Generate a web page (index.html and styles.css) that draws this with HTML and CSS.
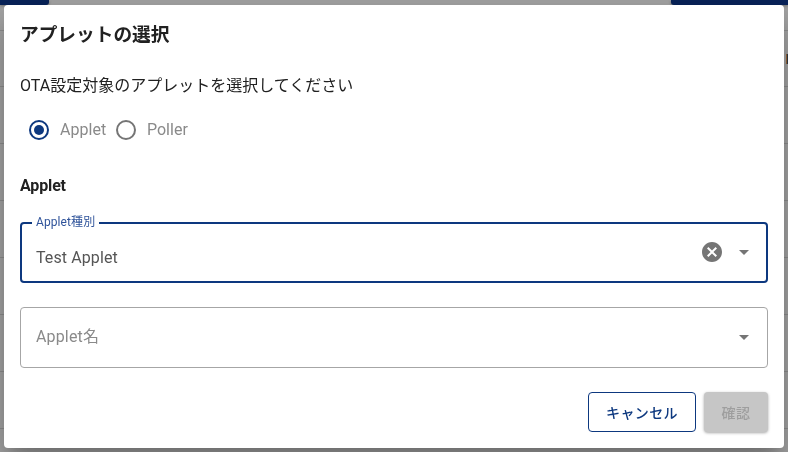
FILE: index.html
```html
<!DOCTYPE html>
<html lang="ja">
<head>
  <meta charset="UTF-8">
  <meta name="viewport" content="width=device-width, initial-scale=1.0">
  <title>アプレットの選択</title>
  <link rel="stylesheet" href="styles.css">
</head>
<body>

<!-- 背面の一覧画面 -->
<div class="page">
  <div class="toolbar">
    <div class="tool tool-left"></div>
    <div class="tool tool-right"></div>
  </div>
  <div class="row row-first"></div>
  <div class="row row-head"><span class="cell-mark"></span></div>
  <div class="row"></div>
  <div class="row"></div>
  <div class="row"></div>
  <div class="row"></div>
  <div class="row"></div>
  <div class="row"></div>
</div>

<!-- ダイアログ -->
<div class="overlay">
  <div class="dialog" role="dialog">
    <h2 class="title">アプレットの選択</h2>
    <p class="description">OTA設定対象のアプレットを選択してください</p>

    <div class="radio-group">
      <label class="radio">
        <svg class="radio-icon checked" viewBox="0 0 24 24">
          <circle cx="12" cy="12" r="9" fill="none" stroke="currentColor" stroke-width="2"/>
          <circle cx="12" cy="12" r="5" fill="currentColor"/>
        </svg>
        <span class="radio-label">Applet</span>
      </label>
      <label class="radio">
        <svg class="radio-icon" viewBox="0 0 24 24">
          <circle cx="12" cy="12" r="9" fill="none" stroke="currentColor" stroke-width="2"/>
        </svg>
        <span class="radio-label">Poller</span>
      </label>
    </div>

    <h3 class="section">Applet</h3>

    <fieldset class="select focused">
      <legend>Applet種別</legend>
      <div class="select-body">
        <span class="value">Test Applet</span>
        <svg class="icon clear" viewBox="0 0 24 24">
          <path d="M12 2C6.47 2 2 6.47 2 12s4.47 10 10 10 10-4.47 10-10S17.53 2 12 2zm5 13.59L15.59 17 12 13.41 8.41 17 7 15.59 10.59 12 7 8.41 8.41 7 12 10.59 15.59 7 17 8.41 13.41 12 17 15.59z"/>
        </svg>
        <svg class="icon arrow" viewBox="0 0 24 24"><path d="M7 10l5 5 5-5z"/></svg>
      </div>
    </fieldset>

    <div class="select">
      <div class="select-body">
        <span class="placeholder">Applet名</span>
        <svg class="icon arrow" viewBox="0 0 24 24"><path d="M7 10l5 5 5-5z"/></svg>
      </div>
    </div>

    <div class="actions">
      <button class="btn btn-outline">キャンセル</button>
      <button class="btn btn-disabled" disabled>確認</button>
    </div>
  </div>
</div>

</body>
</html>
```
FILE: styles.css
```css
* {
  box-sizing: border-box;
}

body {
  margin: 0;
  height: 452px;
  overflow: hidden;
  font-family: Roboto, "Noto Sans CJK JP", sans-serif;
  font-size: 16px;
  color: #212121;
  background: #a6a6a6;
}

/* 背面 */
.toolbar {
  display: flex;
  justify-content: space-between;
  height: 5px;
}

.tool {
  background: #08235a;
  box-shadow: 0 1px 3px rgba(0, 0, 0, 0.3);
}

.tool-left {
  width: 49px;
  border-bottom-right-radius: 3px;
}

.tool-right {
  width: 117px;
  border-bottom-left-radius: 3px;
}

.row {
  display: flex;
  justify-content: flex-end;
  align-items: center;
  height: 57px;
  border-bottom: 1px solid #8f8f8f;
}

.row-first {
  height: 26px;
}

.row-head {
  height: 56px;
}

.cell-mark {
  width: 2px;
  height: 10px;
  border-left: 1px solid #9a6a3c;
  background: #333a44;
}

/* ダイアログ */
.overlay {
  position: fixed;
  inset: 0;
  padding: 5px 4px 4px;
}

.dialog {
  display: flex;
  flex-direction: column;
  height: 443px;
  padding: 16px;
  background: #fff;
  border-radius: 4px;
  box-shadow: 0 11px 15px -7px rgba(0, 0, 0, 0.2), 0 24px 38px 3px rgba(0, 0, 0, 0.14), 0 9px 46px 8px rgba(0, 0, 0, 0.12);
}

.title {
  margin: 0;
  font-size: 18.7px;
  font-weight: 600;
  line-height: 28px;
}

.description {
  margin: 25px 0 0;
  line-height: 24px;
}

.radio-group {
  display: flex;
  gap: 8px;
  margin-top: 20px;
  padding-left: 7.4px;
}

.radio {
  display: flex;
  align-items: center;
  gap: 8.6px;
  height: 24px;
  color: #757575;
}

.radio-icon {
  width: 24px;
  height: 24px;
}

.checked {
  color: #0d387f;
}

.radio-label {
  margin-top: -2px;
  color: #8a8a8a;
  letter-spacing: 0.05px;
}

.section {
  margin: 32px 0 0;
  font-size: 16px;
  font-weight: 700;
  line-height: 24px;
  letter-spacing: -0.15px;
}

.select {
  height: 61px;
  margin: 24px 0 0;
  padding: 0 11.5px 0 15px;
  border: 1px solid #a6a6a6;
  border-radius: 4px;
}

.select-body {
  display: flex;
  align-items: center;
  height: 57px;
}

.focused {
  height: 66px;
  margin-top: 19px;
  padding: 0 10.5px 0 10px;
  border: 2px solid #0d387f;
}

.focused legend {
  height: 12px;
  padding: 0 4px;
  font-size: 12px;
  line-height: 11px;
  letter-spacing: 0.1px;
  color: #2f539a;
}

.focused .select-body {
  height: 45px;
  padding-left: 4px;
}

.value {
  flex: 1;
  padding-top: 11px;
  color: #555;
  letter-spacing: 0.1px;
}

.placeholder {
  flex: 1;
  margin-top: -3px;
  color: #8a8a8a;
  letter-spacing: 0.15px;
}

.icon {
  width: 24px;
  height: 24px;
  fill: #757575;
}

.clear {
  margin-right: 8px;
}

.actions {
  display: flex;
  justify-content: flex-end;
  gap: 8px;
  margin-top: 24px;
}

.btn {
  height: 40px;
  padding: 0;
  border-radius: 4px;
  font-family: inherit;
  font-size: 14px;
  font-weight: 500;
  letter-spacing: 0.4px;
}

.btn-outline {
  width: 108px;
  border: 1px solid #0d387f;
  background: #fff;
  color: #0d387f;
}

.btn-disabled {
  width: 64px;
  border: none;
  background: #c6c6c6;
  color: #9e9e9e;
  box-shadow: 0 1px 3px rgba(0, 0, 0, 0.35);
}
```
